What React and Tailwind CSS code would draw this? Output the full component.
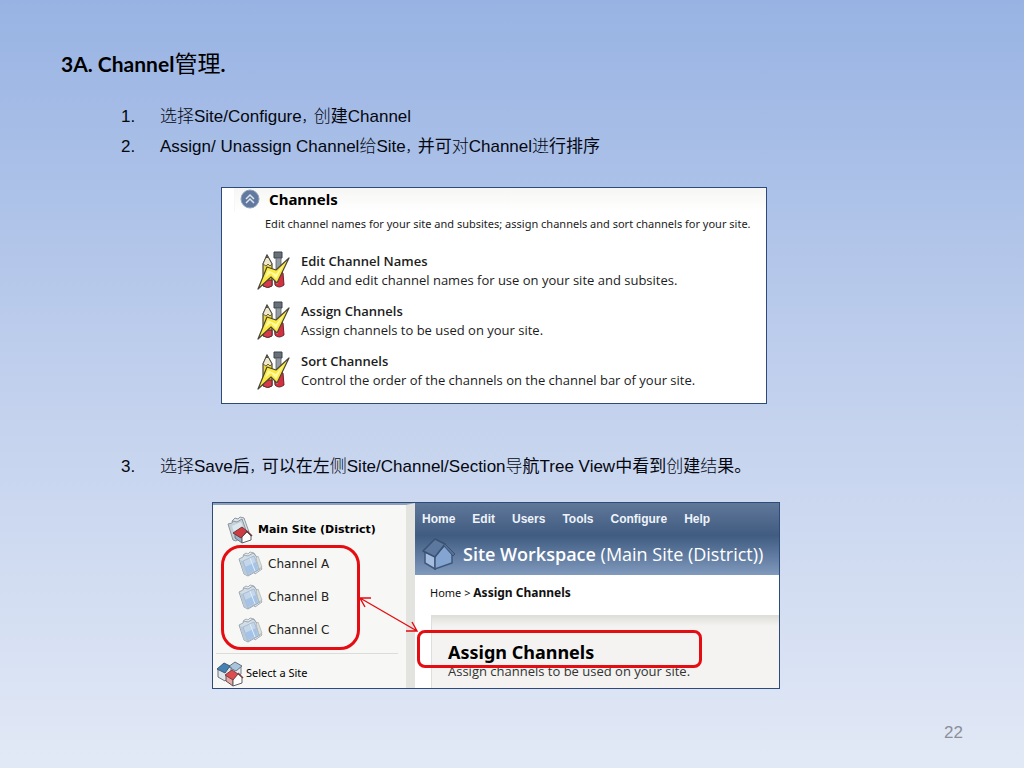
import clsx from 'clsx'

// each run is [text, kind]; "light" runs use the thin CJK weight, "comma" is set small
const STEPS_TOP = [
  [['选择', 'light'], ['Site/Configure'], ['，', 'comma'], ['创', 'light'], ['建Channel']],
  [['Assign/ Unassign Channel'], ['给', 'light'], ['Site'], ['，', 'comma'], ['并可'], ['对', 'light'], ['Channel'], ['进', 'light'], ['行排序']],
]

const STEPS_BOTTOM = [
  [['选择', 'light'], ['Save后'], ['，', 'comma'], ['可以在左'], ['侧', 'light'], ['Site/Channel/Section'], ['导', 'light'], ['航Tree View中看到'], ['创', 'light'], ['建'], ['结', 'light'], ['果。']],
]

const ACTIONS = [
  { title: 'Edit Channel Names', text: 'Add and edit channel names for use on your site and subsites.' },
  { title: 'Assign Channels', text: 'Assign channels to be used on your site.' },
  { title: 'Sort Channels', text: 'Control the order of the channels on the channel bar of your site.' },
]

const CHANNELS = ['Channel A', 'Channel B', 'Channel C']
const MENU = ['Home', 'Edit', 'Users', 'Tools', 'Configure', 'Help']

function Steps({ items, start }) {
  return (
    <ol start={start} className="pl-[60px] font-['Liberation_Sans','Noto_Sans_CJK_SC',sans-serif] text-[17px] leading-[30px] text-[#05070f]">
      {items.map((runs, i) => (
        <li key={i} className="flex">
          <span className="w-[39px] shrink-0">{start + i}.</span>
          <span>
            {runs.map(([text, kind], j) => (
              <span key={j} className={clsx(kind === 'light' && 'font-light', kind === 'comma' && 'text-xs')}>
                {text}
              </span>
            ))}
          </span>
        </li>
      ))}
    </ol>
  )
}

function ToolsIcon() {
  return (
    <svg viewBox="0 0 34 40" className="h-10 w-[34px] shrink-0" aria-hidden="true">
      <path d="M6 13 10 4l5 9v21q-4 4-9 0z" fill="#efd93c" stroke="#4a4638" strokeWidth="1.200" />
      <path d="M6 13 10 4l5 9-2 2-2-2-2 2z" fill="#efe9d2" stroke="#4a4638" strokeWidth="0.800" />
      <path d="m9 7 1-3 1 3z" fill="#333" />
      <path d="M6 29h9v6q-4 3-9 0z" fill="#d83a48" stroke="#5c2a2e" />
      <path d="M17 1h8v6h-8z" fill="#687079" stroke="#3c4248" />
      <path d="M19 7h5v14h-5z" fill="#959ca3" stroke="#596068" strokeWidth="0.800" />
      <path d="M17 22q4-4 9 0l1 12q-5 4-9 0z" fill="#d62f40" stroke="#64282e" />
      <path d="M20 26v7" stroke="#f29aa2" strokeWidth="1.500" />
      <path d="M32 7 20 32l-6-6L1 38l9-22 9 3z" fill="#fbe93e" stroke="#48463c" strokeWidth="1.200" strokeLinejoin="round" />
      <path d="m27 13-8 10-8-4-3 8 6-5 5 6z" fill="#fff9a0" />
    </svg>
  )
}

function PagesIcon() {
  return (
    <svg viewBox="0 0 26 28" className="h-7 w-[26px] shrink-0" aria-hidden="true">
      <path d="m5 5 3-2 2 1 2-2 4 1 2 3 6 13-7 5z" fill="#e9edf0" stroke="#a5aeb5" />
      <path d="m1 9 4-2 1-2 4 1 5-3 3 3 4 13-12 7-4-2z" fill="#d3dde6" stroke="#9ca9b5" />
      <path d="m2 10 3 1 5 14-4-1z" fill="#b9c9d8" />
      <path d="m5 11 11-5 5 13-11 6z" fill="#c3d6ea" stroke="#a1b4c9" strokeWidth="0.800" />
      <path d="m7 17 11-5 2 7-10 5z" fill="#a5c3e6" />
      <path d="m12 8 5 13" stroke="#e3eef8" />
      <path d="m18 8 3 11 3-2-4-11z" fill="#d9dfdc" stroke="#aab2b4" strokeWidth="0.700" />
    </svg>
  )
}

function SiteIcon() {
  return (
    <svg viewBox="0 0 26 28" className="h-7 w-[26px] shrink-0" aria-hidden="true">
      <path d="m5 5 3-3 3 1 2-2 4 1 5 14-9 8z" fill="#dde3e6" stroke="#8e999f" />
      <path d="m1 8 4-1 1-2 4 1 5-3 5 14-11 8-3-1z" fill="#c5d1d8" stroke="#8996a0" />
      <path d="m5 10 9-4 4 10-9 6z" fill="#dce8ee" />
      <path d="M8 18v4l7 5v-6z" fill="#99b6cf" stroke="#55606a" strokeWidth="0.800" />
      <path d="m15 21 5-5 4 4v4l-9 3z" fill="#fff" stroke="#5d6165" />
      <path d="m6 17 9-6 5 4-6 7z" fill="#cf3c42" stroke="#6c3a3c" />
      <path d="m20 15 5 5" stroke="#6c3a3c" strokeWidth="1.500" />
    </svg>
  )
}

function HousesIcon() {
  return (
    <svg viewBox="0 0 28 28" className="size-7 shrink-0" aria-hidden="true">
      <path d="M13 8v7l7 4 5-4V8z" fill="#e3ebf1" stroke="#75818c" />
      <path d="m12 8 7-5 7 4-6 5z" fill="#a9c4dc" stroke="#65727e" />
      <path d="M2 10v8l7 4 6-5V8z" fill="#dfe7ed" stroke="#65727e" />
      <path d="m1 10 7-6 6 3-5 7z" fill="#4581b3" stroke="#405c74" />
      <path d="M10 16v6l7 5v-7z" fill="#e4aaa9" stroke="#6b4a4b" />
      <path d="m17 20 5-5 4 3v6l-9 3z" fill="#fff" stroke="#5b5f64" />
      <path d="m9 16 7-5 6 4-5 6z" fill="#dc4c50" stroke="#7c4142" />
      <path d="m22 14 5 5" stroke="#7c4142" strokeWidth="1.500" />
    </svg>
  )
}

function WorkspaceIcon() {
  return (
    <svg viewBox="0 0 34 34" className="size-[34px] shrink-0" aria-hidden="true">
      <path d="M3 15v11l10 6V19z" fill="#a4bde0" stroke="#3f5878" strokeWidth="1.500" />
      <path d="m13 19 10-11 7 8v10l-17 6z" fill="#84a4d2" stroke="#3f5878" strokeWidth="1.500" />
      <path d="M1 14 13 2l10 5-10 13z" fill="#5c789f" stroke="#3a5170" strokeWidth="1.500" strokeLinejoin="round" />
      <path d="m23 7 10 10-2 2-9-10" fill="#536f96" stroke="#3a5170" />
    </svg>
  )
}

function ChannelsPanel() {
  return (
    <section className="w-full max-w-[546px] border border-[#2d4a78] bg-white pb-3 font-['Open_Sans','Noto_Sans',sans-serif] text-[#1c1c1c]">
      <div className="ml-3 flex h-6 items-center gap-[9px] border-l border-[#f6f6f4] bg-linear-to-b from-[#f6f6f4] to-white pb-[2px] pl-[5px]">
        <svg viewBox="0 0 20 20" className="size-5" aria-hidden="true">
          <circle cx="10" cy="10" r="9" fill="#61799f" stroke="#91a2bd" />
          <path d="m6 10 4-4 4 4M6 14l4-4 4 4" fill="none" stroke="#dde4ee" strokeWidth="1.500" />
        </svg>
        <h2 className="font-['Noto_Sans',sans-serif] text-[15px] font-bold text-black">Channels</h2>
      </div>
      <p className="pt-[2px] pl-[43px] font-['Noto_Sans',sans-serif] text-[11px] leading-5">
        Edit channel names for your site and subsites; assign channels and sort channels for your site.
      </p>
      <ul className="mt-[17px] flex flex-col gap-[10px] pl-[35px]">
        {ACTIONS.map((a) => (
          <li key={a.title} className="flex gap-[10px]">
            <ToolsIcon />
            <div>
              <h3 className="text-[13px] leading-5 font-semibold">{a.title}</h3>
              <p className="text-[13px] leading-[18px]">{a.text}</p>
            </div>
          </li>
        ))}
      </ul>
    </section>
  )
}

function WorkspacePanel() {
  return (
    <section className="relative flex w-full max-w-[568px] border border-[#2d4a78] bg-white">
      <aside className="w-[202px] shrink-0 border-t-2 border-r-[9px] border-t-[#8fa0bb] border-r-[#e3e3df] bg-[#f7f7f5] font-['DejaVu_Sans',sans-serif] text-xs text-[#222]">
        <div className="flex h-[42px] items-center gap-[5px] pt-2 pl-[14px] font-bold text-black">
          <SiteIcon />
          <span className="text-[11px]">Main Site (District)</span>
        </div>
        <ul className="pl-[25px]">
          {CHANNELS.map((c) => (
            <li key={c} className="flex h-[33px] items-center gap-1">
              <PagesIcon />
              {c}
            </li>
          ))}
        </ul>
        <div className="mt-[7px] mr-2 ml-[3px] flex h-[35px] items-center gap-[2px] border-t border-[#dcdcd8] pt-1 font-['Noto_Sans',sans-serif] text-[11px] text-black">
          <HousesIcon />
          Select a Site
        </div>
      </aside>
      <div className="flex min-w-0 flex-1 flex-col">
        <header className="h-[72px] bg-linear-to-b from-[#5f7799] via-[#415c81] via-45% to-[#7f9abd] pl-[7px] text-[#eef3fa]">
          <nav className="flex h-8 items-center gap-[17px] font-['Liberation_Sans',sans-serif] text-xs font-bold">
            {MENU.map((m) => (
              <a key={m} href="#">{m}</a>
            ))}
          </nav>
          <div className="flex h-[38px] items-center gap-[7px]">
            <WorkspaceIcon />
            <h2 className="font-['Open_Sans',sans-serif] text-[18px] font-medium whitespace-nowrap text-white">
              <span className="font-semibold">Site Workspace</span> (Main Site (District))
            </h2>
          </div>
        </header>
        <p className="pt-2 pl-[15px] font-['Noto_Sans',sans-serif] text-[11px] leading-5 text-[#111]">
          <a href="#">Home</a> &gt; <b className="text-xs leading-5">Assign Channels</b>
        </p>
        <div className="mt-3 ml-4 flex-1 border-t border-l border-[#dededa] bg-linear-to-b from-[#dfdfda] to-[#f4f3f1] to-[10px] pt-6 pl-4">
          <h3 className="font-['Noto_Sans',sans-serif] text-[18px] leading-6 font-bold text-black">Assign Channels</h3>
          <p className="font-['Open_Sans',sans-serif] text-[13px] leading-[14px] text-[#333]">Assign channels to be used on your site.</p>
        </div>
      </div>

      {/* callouts */}
      <div className="absolute top-[42px] left-2 h-[105px] w-[139px] rounded-[20px] border-3 border-[#e60d12]" />
      <div className="absolute top-[127px] left-[204px] h-[38px] w-[285px] rounded-lg border-3 border-[#e60d12]" />
      <svg viewBox="0 0 60 40" className="absolute top-[92px] left-[146px] h-10 w-[60px]" fill="none" stroke="#e60d12" strokeWidth="1.400" aria-hidden="true">
        <path d="M1 3 58 36M12 3H1l5 9M47 36h11l-5-9" />
      </svg>
    </section>
  )
}

export default function App() {
  return (
    <main className="flex min-h-screen flex-col bg-linear-to-b from-[#98b3e3] via-[#c1d0ed] to-[#e2e9f6] px-[61px] pt-[47px] pb-5">
      <h1 className="font-['Lato','Noto_Sans_CJK_SC',sans-serif] text-[21px] leading-8 font-bold text-black">
        3A. Channel<span className="text-[23px] leading-8 font-normal">管理</span>.
      </h1>
      <div className="mt-[22px]">
        <Steps items={STEPS_TOP} start={1} />
      </div>
      <div className="mt-[25px] pl-40">
        <ChannelsPanel />
      </div>
      <div className="mt-12">
        <Steps items={STEPS_BOTTOM} start={3} />
      </div>
      <div className="mt-5 pl-[151px]">
        <WorkspacePanel />
      </div>
      <footer className="mt-auto text-right font-['Liberation_Sans',sans-serif] text-[17px] leading-[30px] text-[#8b8f99]">22</footer>
    </main>
  )
}
